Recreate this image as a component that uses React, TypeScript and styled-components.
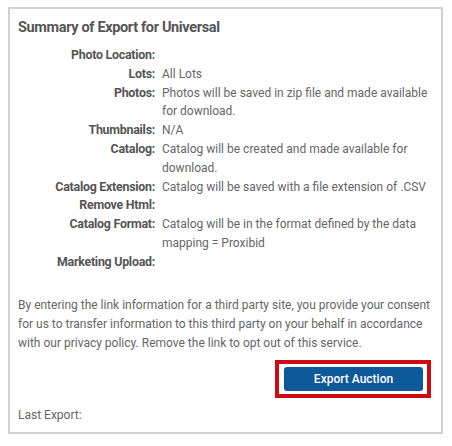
import React from 'react';
import styled, { createGlobalStyle } from 'styled-components';

const GlobalStyle = createGlobalStyle`
  body {
    margin: 0;
    background: #ffffff;
    font-family: Roboto, "Liberation Sans", Arial, sans-serif;
  }
`;

const Panel = styled.div`
  box-sizing: border-box;
  margin: 7px 0 0 8px;
  width: 435px;
  height: 427px;
  border: 2px solid #d2d2d2;
  padding: 9px 8px 0 8px;
  display: flex;
  flex-direction: column;
`;

const Title = styled.h3`
  margin: 0 0 8px 0;
  font-size: 14.5px;
  letter-spacing: -0.35px;
  line-height: 20px;
  font-weight: 700;
  color: #555555;
`;

const Summary = styled.dl`
  margin: 0;
  display: grid;
  grid-template-columns: 137px 1fr;
  column-gap: 7px;
  font-size: 12px;
  line-height: 18.8px;
`;

const Label = styled.dt`
  margin: 0;
  text-align: right;
  font-size: 12.4px;
  letter-spacing: -0.25px;
  font-weight: 700;
  color: #555555;
`;

const Value = styled.dd`
  margin: 0;
  color: #666666;
  min-height: 18.8px;
`;

const Consent = styled.p`
  margin: 24px 0 0 0;
  font-size: 12px;
  line-height: 19px;
  color: #666666;
`;

const Actions = styled.div`
  display: flex;
  justify-content: flex-end;
  margin: 7px 2px 0 0;
`;

const Highlight = styled.div`
  border: 4px solid #cc0b13;
  padding: 3px 4px 3px 5px;
`;

const PrimaryButton = styled.button`
  width: 139px;
  height: 24px;
  border: none;
  border-radius: 3px;
  background: #0d5a9b;
  color: #ffffff;
  font-family: Roboto, "Liberation Sans", Arial, sans-serif;
  font-size: 12px;
  font-weight: 500;
  cursor: pointer;
`;

const LastExport = styled.div`
  margin-top: 8px;
  font-size: 12px;
  line-height: 19px;
  color: #666666;
`;

const rows: { label: string; value?: string }[] = [
  { label: 'Photo Location:' },
  { label: 'Lots:', value: 'All Lots' },
  { label: 'Photos:', value: 'Photos will be saved in zip file and made available for download.' },
  { label: 'Thumbnails:', value: 'N/A' },
  { label: 'Catalog:', value: 'Catalog will be created and made available for download.' },
  { label: 'Catalog Extension:', value: 'Catalog will be saved with a file extension of .CSV' },
  { label: 'Remove Html:' },
  { label: 'Catalog Format:', value: 'Catalog will be in the format defined by the data mapping = Proxibid' },
  { label: 'Marketing Upload:' },
];

export default function App() {
  return (
    <>
      <GlobalStyle />
      <Panel>
        <Title>Summary of Export for Universal</Title>
        <Summary>
          {rows.map(row => (
            <React.Fragment key={row.label}>
              <Label>{row.label}</Label>
              <Value>{row.value}</Value>
            </React.Fragment>
          ))}
        </Summary>
        <Consent>
          By entering the link information for a third party site, you provide your consent
          for us to transfer information to this third party on your behalf in accordance
          with our privacy policy. Remove the link to opt out of this service.
        </Consent>
        <Actions>
          <Highlight>
            <PrimaryButton type="button">Export Auction</PrimaryButton>
          </Highlight>
        </Actions>
        <LastExport>Last Export:</LastExport>
      </Panel>
    </>
  );
}
